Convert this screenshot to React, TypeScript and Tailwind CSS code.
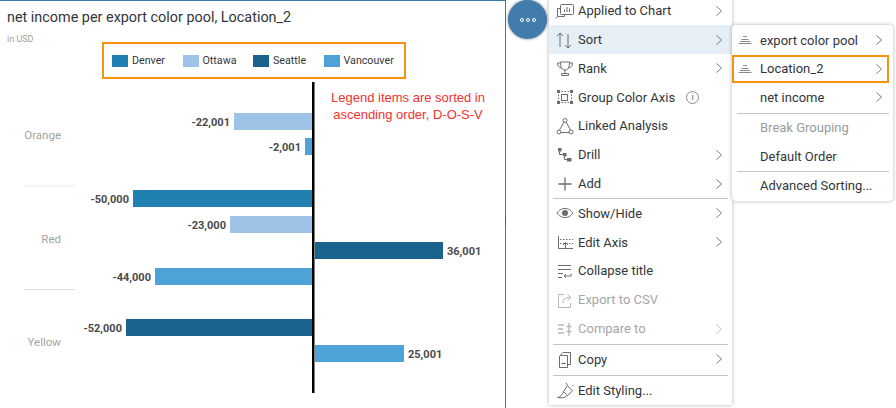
const DENVER = "#2180b2"
const OTTAWA = "#9dc3e6"
const SEATTLE = "#1a638c"
const VANCOUVER = "#4da3d8"

const legend = [
  { name: "Denver", color: "bg-[#2180b2]" },
  { name: "Ottawa", color: "bg-[#9dc3e6]" },
  { name: "Seattle", color: "bg-[#1a638c]" },
  { name: "Vancouver", color: "bg-[#4da3d8]" },
]

const bars = [
  { x: 234, w: 78, y: 113, fill: OTTAWA, label: "-22,001" },
  { x: 305, w: 7, y: 138, fill: VANCOUVER, label: "-2,001" },
  { x: 133, w: 179, y: 190, fill: DENVER, label: "-50,000" },
  { x: 230, w: 82, y: 216, fill: OTTAWA, label: "-23,000" },
  { x: 315, w: 128, y: 242, fill: SEATTLE, label: "36,001" },
  { x: 155, w: 157, y: 268, fill: VANCOUVER, label: "-44,000" },
  { x: 126, w: 186, y: 319, fill: SEATTLE, label: "-52,000" },
  { x: 315, w: 89, y: 345, fill: VANCOUVER, label: "25,001" },
]

const Chevron = ({ muted }: { muted?: boolean }) => (
  <svg width="8" height="12" viewBox="0 0 8 12" fill="none" stroke={muted ? "#c4c4c4" : "#77797b"} strokeWidth="1">
    <path d="M1.5 1.5 L6.5 6 L1.5 10.5" />
  </svg>
)

const Ico = ({ children }: { children: React.ReactNode }) => (
  <svg width="22" height="20" viewBox="0 0 22 20" fill="none" stroke="currentColor" strokeWidth="1">
    {children}
  </svg>
)

const icons: Record<string, React.ReactNode> = {
  applied: (
    <Ico>
      <rect x="6.5" y="3.5" width="13" height="10" rx="1" />
      <path d="M10.5 11V8.5M13 11V6M15.5 11V7.5" />
      <path d="M6 7.5H3.5V15.5H10.5V13.5M3.5 15.5L2 17.5" />
    </Ico>
  ),
  sort: (
    <Ico>
      <path d="M6 17V3M3 6L6 3L9 6M14 4V18M11 15L14 18L17 15" />
    </Ico>
  ),
  rank: (
    <Ico>
      <path d="M6.5 4H15.5C15.5 9 14.5 12 11 12C7.5 12 6.5 9 6.5 4Z" />
      <path d="M6.5 5H3.5C3.5 8 5 9.5 7.5 10M15.5 5H18.5C18.5 8 17 9.5 14.5 10M11 12V15.5M7.5 17.5H14.5V15.5H7.5Z" />
    </Ico>
  ),
  group: (
    <Ico>
      <path d="M4.5 4.5H17.5M4.5 15.5H17.5M4.5 4.5V15.5M17.5 4.5V15.5" strokeDasharray="1.5 1.5" />
      <rect x="3" y="3" width="3" height="3" fill="currentColor" stroke="none" />
      <rect x="16" y="3" width="3" height="3" fill="currentColor" stroke="none" />
      <rect x="3" y="14" width="3" height="3" fill="currentColor" stroke="none" />
      <rect x="16" y="14" width="3" height="3" fill="currentColor" stroke="none" />
      <rect x="7.5" y="7.5" width="6" height="6" />
    </Ico>
  ),
  linked: (
    <Ico>
      <path d="M10 6L5.5 14M12 6L16.5 14M7 16.5H15" />
      <circle cx="11" cy="4.5" r="2" />
      <circle cx="5" cy="16" r="2" />
      <circle cx="17" cy="16" r="2" />
    </Ico>
  ),
  drill: (
    <Ico>
      <rect x="4" y="3" width="3.5" height="3.5" fill="currentColor" stroke="none" />
      <rect x="9" y="8" width="3.5" height="3.5" fill="currentColor" stroke="none" />
      <rect x="13" y="13" width="4.5" height="3.5" fill="currentColor" stroke="none" />
      <path d="M5.5 6.5V9.5H9M10.5 11.5V14.5H13" />
    </Ico>
  ),
  add: (
    <Ico>
      <path d="M11 3.5V16.5M4.5 10H17.5" strokeWidth="1.3" />
    </Ico>
  ),
  eye: (
    <Ico>
      <path d="M3 10C5.5 6.5 8 5.5 11 5.5C14 5.5 16.5 6.5 19 10C16.5 13.5 14 14.5 11 14.5C8 14.5 5.5 13.5 3 10Z" />
      <circle cx="11" cy="10" r="3" fill="currentColor" stroke="none" />
    </Ico>
  ),
  axis: (
    <Ico>
      <path d="M4.5 4V16.5H19" />
      <path d="M6 7.5H19M6 11.5H19" strokeDasharray="1.5 1.5" />
      <path d="M11.5 16V10.5M9 13L11.5 10.5L14 13" />
    </Ico>
  ),
  collapse: (
    <Ico>
      <path d="M4 4.5H17M4 8.5H17M4 12.5H9M17 12.5V15H10M12 13L10 15L12 17M4 16.5H8" />
    </Ico>
  ),
  export: (
    <Ico>
      <path d="M10 4.5H4.5V17.5H16.5V13M9 13C9 9.5 11 7.5 16 7.5M13.5 4.5L17 7.5L13.5 10.5" />
    </Ico>
  ),
  compare: (
    <Ico>
      <path d="M4 6H10M4 10H9M4 14H10M15 4V17M12.5 7.5H17.5M12.5 12.5H17.5" strokeWidth="1.3" />
    </Ico>
  ),
  copy: (
    <Ico>
      <path d="M9 3.5H16.5V15.5H14" />
      <path d="M9 3.5L6 6.5H13.5V18.5H5.5V7" />
      <path d="M7.5 14.5H11.5" strokeWidth="1.3" />
    </Ico>
  ),
  styling: (
    <Ico>
      <path d="M3.5 17.5C6 17 8.5 15 9.5 11.5L13.5 15.5C11 17.5 7 18.5 3.5 17.5Z" />
      <path d="M9.5 11.5L13.5 5.5L18.5 11L13.5 15.5M13.5 5.5L12 3" />
      <path d="M18.5 5L19.5 6" />
    </Ico>
  ),
}

const SortLines = () => (
  <svg width="14" height="10" viewBox="0 0 14 10" stroke="#8a8b8c" strokeWidth="1">
    <path d="M5 1.5H9M3.5 4.5H10.5M2 6.5H12M0.5 8.5H13.5" />
  </svg>
)

type MenuItem = { sepClass?: string; icon?: string; label?: string; sub?: boolean; off?: boolean; active?: boolean; info?: boolean }

const menu: MenuItem[] = [
  { icon: "applied", label: "Applied to Chart", sub: true },
  { icon: "sort", label: "Sort", sub: true, active: true },
  { icon: "rank", label: "Rank", sub: true },
  { icon: "group", label: "Group Color Axis", info: true },
  { icon: "linked", label: "Linked Analysis" },
  { icon: "drill", label: "Drill", sub: true },
  { icon: "add", label: "Add", sub: true },
  { sepClass: "mt-0" },
  { icon: "eye", label: "Show/Hide", sub: true },
  { icon: "axis", label: "Edit Axis", sub: true },
  { icon: "collapse", label: "Collapse title" },
  { icon: "export", label: "Export to CSV", off: true },
  { icon: "compare", label: "Compare to", sub: true, off: true },
  { sepClass: "mt-[1px]" },
  { icon: "copy", label: "Copy", sub: true },
  { sepClass: "mt-[1px]" },
  { icon: "styling", label: "Edit Styling..." },
]

const SubRow = ({ label, lines, sub, off, picked }: { label: string; lines?: boolean; sub?: boolean; off?: boolean; picked?: boolean }) => (
  <div className={`flex items-center h-[28.5px] mr-[4px] pl-[3px] pr-[4px] border-2 ${picked ? "border-[#f5920f]" : "border-transparent"}`}>
    <span className="w-[23px] flex items-center pl-[1px]">{lines && <SortLines />}</span>
    <span className={`flex-1 ${off ? "text-[#9a9b9c]" : "text-[#32363a]"}`}>{label}</span>
    {sub && <Chevron />}
  </div>
)

export default function App() {
  return (
    <div className="relative w-[896px] h-[408px] overflow-hidden bg-white font-['Roboto','Noto_Sans',sans-serif]">
      {/* chart panel */}
      <div className="w-[506px] h-[408px] border-t border-r border-[#3f78ab] relative">
        <div className="pt-[7px] pl-[7px] text-[14.4px] leading-[19px] text-[#32363a]">net income per export color pool, Location_2</div>
        <div className="pl-[7px] mt-[6px] text-[9px] leading-[12px] text-[#a0a0a0]">in USD</div>

        <div className="absolute left-[102px] top-[41px] w-[304px] h-[37px] border-2 border-[#f5920f] flex items-center pl-[8px] pt-[2px]">
          {legend.map((l) => (
            <div key={l.name} className="flex items-center gap-[4px] w-[70.5px]">
              <span className={`w-[16px] h-[12px] ${l.color}`} />
              <span className="text-[10.7px] text-[#32363a]">{l.name}</span>
            </div>
          ))}
        </div>

        <div className="absolute left-[310px] top-[88px] w-[196px] text-center text-[13px] leading-[17px] text-[#f5302e] font-['Liberation_Sans',sans-serif]">
          Legend items are sorted in
          <br />
          ascending order, D-O-S-V
        </div>

        <svg className="absolute left-0 -top-px" width="505" height="408" fontSize="11">
          <g fontSize="11.5" fill="#a3a3a3" textAnchor="end">
            <text x="61" y="139">Orange</text>
            <text x="61" y="243">Red</text>
            <text x="61" y="346">Yellow</text>
          </g>
          <path d="M24 186H75" stroke="#ececec" />
          <path d="M24 289.5H75" stroke="#dedede" />
          {bars.map((b) => (
            <g key={b.label}>
              <rect x={b.x} y={b.y} width={b.w} height="17" fill={b.fill} />
              <text
                x={b.x < 313 ? b.x - 4 : b.x + b.w + 4}
                y={b.y + 12.5}
                textAnchor={b.x < 313 ? "end" : "start"}
                fontWeight="700"
                fill="#4a4a4a"
              >
                {b.label}
              </text>
            </g>
          ))}
          <rect x="312" y="82" width="2.5" height="311" fill="#000" />
        </svg>
        <div className="absolute -right-px top-[214px] w-px h-[11px] bg-[#1f63a0]" />
      </div>

      {/* more button */}
      <div className="absolute left-[508px] top-0 w-[39px] h-[39px] rounded-full bg-[#427cac] shadow-[0_0_3px_rgba(0,0,0,0.5)] flex items-center justify-center gap-[2px]">
        <span className="w-[4px] h-[4px] rounded-full border border-white" />
        <span className="w-[4px] h-[4px] rounded-full border border-white" />
        <span className="w-[4px] h-[4px] rounded-full border border-white" />
      </div>

      {/* context menu */}
      <div className="absolute left-[549px] -top-[3.5px] w-[183px] bg-white shadow-[0_0_4px_rgba(0,0,0,0.3)] text-[13px]">
        {menu.map((m, i) =>
          m.label === undefined ? (
            <div key={i} className={`h-px bg-[#c4c4c4] ml-[4px] mr-[4px] ${m.sepClass}`} />
          ) : (
            <div
              key={m.label}
              className={`flex items-center h-[28.8px] pl-[5px] pr-[9px] ${m.active ? "bg-[#e5eff5]" : ""} ${m.off ? "text-[#a5a6a7]" : "text-[#32363a]"}`}
            >
              <span className={`w-[24px] ${m.off ? "text-[#b5b6b7]" : "text-[#6a6d70]"}`}>{icons[m.icon!]}</span>
              <span className="whitespace-nowrap">{m.label}</span>
              {m.info && (
                <span className="ml-[11px] w-[13px] h-[13px] rounded-full border border-[#8a8b8c] text-[9px] leading-[11px] text-center text-[#6a6d70]">i</span>
              )}
              <span className="flex-1" />
              {m.sub && <Chevron muted={m.off} />}
            </div>
          ),
        )}
      </div>

      {/* sort submenu */}
      <div className="absolute left-[732px] top-[25px] w-[161px] py-[1px] bg-white rounded-[4px] shadow-[0_0_4px_rgba(0,0,0,0.3)] text-[13px]">
        <SubRow label="export color pool" lines sub />
        <SubRow label="Location_2" lines sub picked />
        <SubRow label="net income" sub />
        <div className="h-px bg-[#c4c4c4] ml-[5px] mr-[4px] mt-[1px]" />
        <SubRow label="Break Grouping" off />
        <SubRow label="Default Order" />
        <div className="h-px bg-[#c4c4c4] ml-[5px] mr-[4px]" />
        <SubRow label="Advanced Sorting..." />
      </div>
    </div>
  )
}
